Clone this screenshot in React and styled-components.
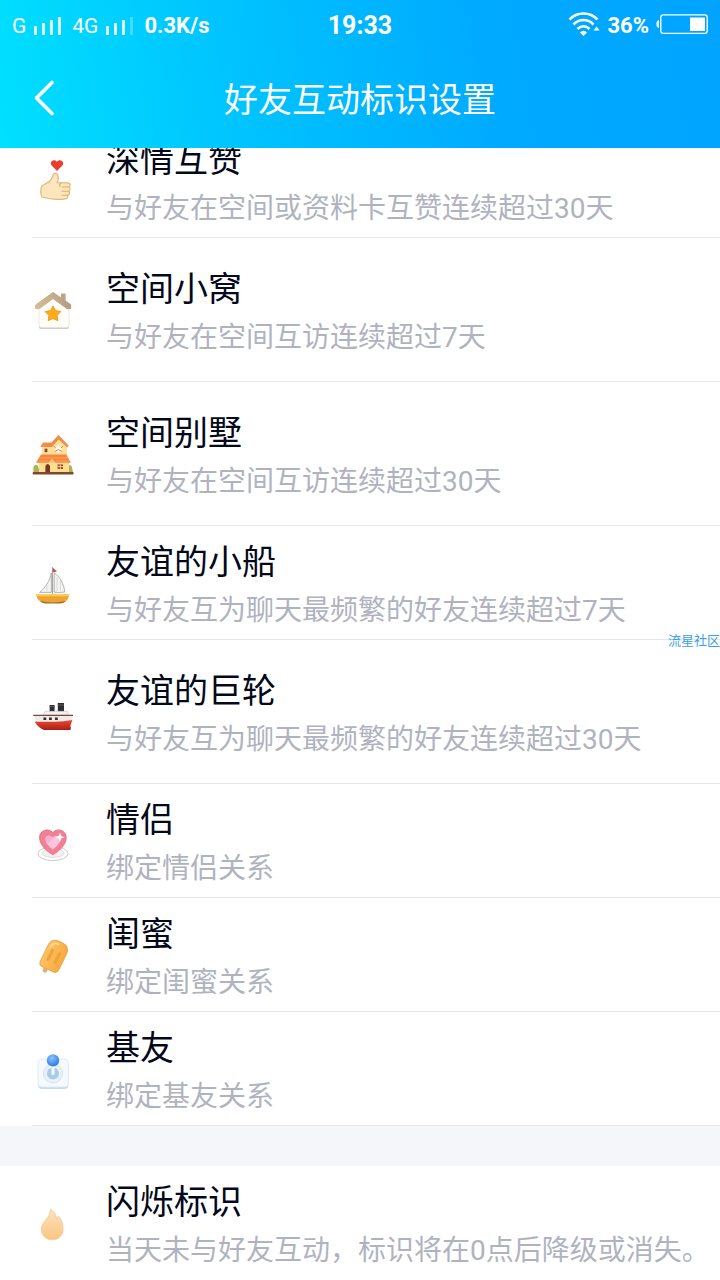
import React from "react";
import styled, { createGlobalStyle } from "styled-components";

const ThumbIcon = () => (
  <Icon viewBox="1 1 42 44" aria-hidden="true">
    <path d="M26 13 L20.6 7.4 C18 4 22.6 0 26 3.8 C29.4 0 34 4 31.4 7.4 Z" fill="#e8402f" />
    <path
      d="M11 28 C13 26 17 25 19 23 C21 20 22 19 22.4 16.6 C23 14.6 26.4 15 27 17.4 C27.6 20 27 22.6 26.4 24.6 L37 24.8 C39.4 25 39.8 28 38 29 C39.6 30 39.4 32.6 37.8 33.2 C39 34.4 38.6 36.6 36.8 37.2 C37.4 38.8 36.4 40.6 34.4 40.8 C27 42 19 41.6 11 39 C9.6 36 9.6 31 11 28 Z"
      fill="#fde6bd"
      stroke="#dfb878"
      strokeWidth="1.2"
    />
    <path
      d="M38 29 H31 M37.8 33.2 H31 M36.8 37.2 H31 M30 25 C28.6 26 28.4 27.4 29 28.4"
      fill="none"
      stroke="#dfae68"
      strokeWidth="1.1"
      strokeLinecap="round"
    />
  </Icon>
);

const HouseIcon = () => (
  <Icon viewBox="1 1 42 44" aria-hidden="true">
    <defs>
      <linearGradient id="roof" x1="0" y1="0" x2="1" y2="0">
        <stop offset="0" stopColor="#d4bd94" />
        <stop offset="1" stopColor="#b59b83" />
      </linearGradient>
    </defs>
    <rect x="8" y="39" width="30" height="3" rx="1.4" fill="#d2cdc8" />
    <path d="M22 9 L38 21 V38 Q38 40.4 36 40.4 H10 Q8 40.4 8 38 V21 Z" fill="#fffdfa" stroke="#e7e0da" strokeWidth="0.8" />
    <rect x="30" y="6.4" width="4.6" height="10" rx="0.8" fill="#bba28a" />
    <path d="M22 5.4 L39.6 17.6 V21.6 H36 L22 11.6 L8.4 21.6 H4.6 V18 Z" fill="url(#roof)" stroke="url(#roof)" strokeLinejoin="round" />
    <path
      d="M22 19 L24.5 23.6 L29.8 24.6 L26.1 28.4 L26.8 33.6 L22 31.4 L17.2 33.6 L17.9 28.4 L14.2 24.6 L19.5 23.6 Z"
      fill="#ffad1f"
      stroke="#f59a12"
      strokeLinejoin="round"
    />
  </Icon>
);

const VillaIcon = () => (
  <Icon viewBox="1 1 42 44" aria-hidden="true">
    <path d="M2.4 42 V36 Q4.4 32 7 35 L9 42 Z M36 42 V36 Q39 32 41 36 L42 42 Z" fill="#a9b455" />
    <path d="M11 15 H20 L27.4 7 L36 15 V25 H11 Z" fill="#ffdf9c" />
    <path d="M12 11.6 H20.6 L27.4 4 L37.6 14.6 L36.4 16.4 L27.6 8.4 L21 16 H9.4 Z" fill="#f38b42" />
    <path d="M23.6 14.4 L26 16 L27.4 13.6 L29 16 L31.4 14.4 L31 19.6 L27.4 22 L23.8 19.6 Z" fill="#fff8e4" />
    <path d="M22.6 15 L24.8 17 M32.2 15 L30 17 M24 20.4 L27.4 18.6 L31 20.4" stroke="#dc8448" fill="none" />
    <rect x="13.6" y="17.6" width="2.8" height="3.6" fill="#884a2c" />
    <rect x="8" y="30" width="30" height="12" fill="#ffdd91" />
    <path d="M10 23.6 H35.4 L39.8 31.8 H5 Z" fill="#f7863b" />
    <path d="M17 32 L21 27.6 L25 32 Z" fill="#ffc27c" />
    <path d="M9 27 H37 M8 30 H17 M25 30 H38" stroke="#ffa968" strokeWidth="0.8" />
    <path d="M14.4 41.4 V35 Q16.7 30.8 19 35 V41.4 Z" fill="#75371e" />
    <rect x="26.6" y="33.4" width="5.4" height="4.6" fill="#954d2b" />
    <path d="M29.3 33.4 V38 M26.6 35.6 H32" stroke="#ffe0a0" strokeWidth="0.8" />
    <rect x="1.6" y="41" width="41" height="2.6" rx="1" fill="#7c4930" />
  </Icon>
);

const SailboatIcon = () => (
  <Icon viewBox="1 1 42 44" aria-hidden="true">
    <path d="M21 7 L26 11.6 L21 12.6 Z" fill="#cc4a3a" />
    <path d="M20.4 13 C19 21 14 28 8.6 32.4 H20.4 Z M23.2 12.8 C29 17 33 24 33.8 32 Q28 33 23.2 32.2 Z" fill="#f4f4f4" stroke="#aaa" strokeWidth="0.9" />
    <path d="M16 25 V31 M26 17 V31 M29.4 21 V31" stroke="#d4d4d4" strokeWidth="0.8" />
    <path d="M21.6 8 V34" stroke="#a39a93" strokeWidth="1" />
    <path d="M5 34 H38.4 Q37 42.6 31 42.6 H13 Q6.6 42.4 5 34 Z" fill="#eda532" />
    <path d="M5 34 H38.4 L37.8 36.2 H5.6 Z" fill="#ffc95c" />
    <path d="M9 41 Q22 43.6 35 41 Q33 43.4 30 43.4 H14 Q10.6 43.4 9 41 Z" fill="#a87025" />
  </Icon>
);

const LinerIcon = () => (
  <Icon viewBox="1 1 42 44" aria-hidden="true">
    <defs>
      <linearGradient id="hull" x1="0" y1="0" x2="0" y2="1">
        <stop offset="0" stopColor="#ee4c36" />
        <stop offset="1" stopColor="#a91d14" />
      </linearGradient>
    </defs>
    <path d="M18.6 16 H23.6 V22.6 H18.6 Z M26.8 14 H33 V22.6 H26.8 Z" fill="#2e2f35" />
    <path d="M18.6 17.6 H23.6 M26.8 16 H33" stroke="#66676d" strokeWidth="0.8" />
    <path d="M14 22.4 H36.6 L37.6 26.4 H12.4 Z" fill="#f4f2f0" stroke="#ccc8c5" strokeWidth="0.7" />
    <path d="M2.4 26.4 H41.6 L41 34 H5.4 Z" fill="#efebe8" />
    <path d="M2.2 26.4 H42" stroke="#7b4642" strokeWidth="1.2" />
    <path d="M3.6 32.8 H24 Q32 32.4 41.2 31 L39.4 37 Q40.6 40.6 39 41 H13 Q7.6 39 3.6 32.8 Z" fill="url(#hull)" />
    <path d="M12.4 28.4 H15.2 V31 H12.4 Z M18 28.4 H20.8 V31 H18 Z M24 28.4 H26.8 V31 H24 Z" fill="#35302f" />
  </Icon>
);

const HeartIcon = () => (
  <Icon viewBox="1 1 42 44" aria-hidden="true">
    <ellipse cx="22" cy="35.6" rx="15" ry="7" fill="#fff" stroke="#cfcaca" />
    <ellipse cx="22" cy="35" rx="11" ry="4.4" fill="#f7eff0" stroke="#ddd5d6" strokeWidth="0.8" />
    <path d="M21.8 36.6 C16 33.6 8.6 27 8.6 19.6 C8.6 12 17.6 9.6 21.8 14.6 C26 9.6 35.2 12 35.2 19.6 C35.2 27 27.6 33.6 21.8 36.6 Z" fill="#f27f93" stroke="#ea7187" />
    <path d="M21.8 31.4 C18 28.4 14.4 25 14.4 21.4 C14.4 17 19.8 16.6 21.8 20 C23.8 16.6 29.2 17 29.2 21.4 C29.2 25 25.6 28.4 21.8 31.4 Z" fill="#fcc6df" />
    <path d="M14.6 20 C15.4 16.6 20 17 21.8 20 L17 26 C15 24 14 22 14.6 20 Z" fill="#f9afd2" />
    <path d="M29 14.6 L30.2 18 L33.6 19.2 L30.2 20.4 L29 24 L27.8 20.4 L24.4 19.2 L27.8 18 Z" fill="#fff" />
  </Icon>
);

const PopsicleIcon = () => (
  <Icon viewBox="1 1 42 44" aria-hidden="true">
    <defs>
      <linearGradient id="ice" x1="0" y1="0" x2="1" y2="0">
        <stop offset="0" stopColor="#ffc263" />
        <stop offset="1" stopColor="#f9aa40" />
      </linearGradient>
    </defs>
    <g transform="rotate(26 23 24)">
      <rect x="18.8" y="37" width="4.6" height="6" rx="2" fill="#d9b182" />
      <path d="M13 17 Q13 8.6 21 8.6 H25 Q33.4 8.6 33.4 17 V34 Q33.4 38.6 29 38.6 H17 Q13 38.6 13 34 Z" fill="url(#ice)" stroke="#eeaa50" />
      <rect x="17.6" y="18" width="3.2" height="13" rx="1.6" fill="#f0a23c" />
      <rect x="25.4" y="18" width="3.2" height="13" rx="1.6" fill="#f0a23c" />
      <path d="M16 17 Q16.4 11.6 22 11.4" fill="none" stroke="#ffe1a2" strokeWidth="1.6" strokeLinecap="round" />
    </g>
  </Icon>
);

const JoystickIcon = () => (
  <Icon viewBox="1 1 42 44" aria-hidden="true">
    <defs>
      <radialGradient id="ball" cx="0.4" cy="0.3" r="0.7">
        <stop offset="0" stopColor="#8ac4ff" />
        <stop offset="1" stopColor="#2e79e3" />
      </radialGradient>
    </defs>
    <rect x="7" y="15" width="30.4" height="28" rx="4" fill="#cbdcea" />
    <rect x="7" y="13" width="30.4" height="28" rx="4" fill="#f4fafe" stroke="#dde9f2" strokeWidth="0.8" />
    <circle cx="22" cy="27.4" r="9.6" fill="#e8f1f8" stroke="#d6e4ef" />
    <circle cx="22" cy="27.4" r="6" fill="#a9cbe9" />
    <path d="M20.4 18 H23.6 V28 Q22 30 20.4 28 Z" fill="#f4f8fb" />
    <circle cx="22" cy="14.4" r="6.2" fill="url(#ball)" />
  </Icon>
);

const FlameIcon = () => (
  <Icon viewBox="1 1 42 44" aria-hidden="true">
    <defs>
      <linearGradient id="flame" x1="0" y1="0" x2="0" y2="1">
        <stop offset="0" stopColor="#fde2bd" />
        <stop offset="1" stopColor="#fcc581" />
      </linearGradient>
    </defs>
    <path
      d="M19.4 9.4 C24 12 25.4 15.6 25.6 20 C26.6 18.6 27 17.6 27 16 C30.6 19 32 24 32 29 C32 35.6 27.4 39.8 21.4 39.8 C15 39.8 10.4 35.6 10.4 29.6 C10.4 24 14 21 16.6 17.6 C18.4 15 19.4 12.6 19.4 9.4 Z"
      fill="url(#flame)"
      stroke="#f5cea0"
    />
  </Icon>
);

const marks = [
  { title: "深情互赞", text: "与好友在空间或资料卡互赞连续超过30天", icon: <ThumbIcon /> },
  { title: "空间小窝", text: "与好友在空间互访连续超过7天", icon: <HouseIcon />, tall: true },
  { title: "空间别墅", text: "与好友在空间互访连续超过30天", icon: <VillaIcon />, tall: true },
  { title: "友谊的小船", text: "与好友互为聊天最频繁的好友连续超过7天", icon: <SailboatIcon /> },
  { title: "友谊的巨轮", text: "与好友互为聊天最频繁的好友连续超过30天", icon: <LinerIcon />, tall: true },
  { title: "情侣", text: "绑定情侣关系", icon: <HeartIcon /> },
  { title: "闺蜜", text: "绑定闺蜜关系", icon: <PopsicleIcon /> },
  { title: "基友", text: "绑定基友关系", icon: <JoystickIcon /> },
];

const Signal = ({ weak }) => (
  <SignalBars viewBox="0 0 28 22" aria-hidden="true">
    <path d="M1.5 20 V11 M9.5 20 V8 M17.5 20 V5" />
    <path d="M25.5 20 V2" opacity={weak ? 0.3 : 1} />
  </SignalBars>
);

const MarkRow = ({ item }) => (
  <Row $tall={item.tall}>
    {item.icon}
    <RowBody>
      <RowTitle>{item.title}</RowTitle>
      <RowText>{item.text}</RowText>
    </RowBody>
  </Row>
);

const App = () => {
  return (
    <Page>
      <GlobalStyle />
      <Header>
        <StatusBar>
          <StatusLeft>
            <Network>G</Network>
            <Signal />
            <Network>4G</Network>
            <Signal weak />
            <StatusText>0.3K/s</StatusText>
          </StatusLeft>
          <Clock>19:33</Clock>
          <StatusRight>
            <Wifi viewBox="0 0 32 28" aria-hidden="true">
              <path d="M1.5 7.5 C9 -0.5 22 -0.5 29.5 7.5 M5.5 12.5 C11 6.5 20 6.5 25.5 12.5 M9.5 17 C13 13.4 18 13.4 21.5 17" fill="none" stroke="#fff" strokeWidth="2.6" />
              <path d="M12 20.4 Q15.5 17 19 20.4 L15.5 24 Z M28.6 14.6 L31.6 18.6 H25.6 Z" fill="#fff" />
            </Wifi>
            <StatusText>36%</StatusText>
            <Battery viewBox="0 0 52 26" aria-hidden="true">
              <rect x="4.8" y="1.8" width="46.4" height="18.6" rx="2.4" fill="none" stroke="#fff" strokeWidth="1.3" />
              <path d="M3 7 V15 Q0.4 14.6 0.4 11 Q0.4 7.4 3 7 Z M34 4.6 H49 V18 H34 Z" fill="#fff" />
            </Battery>
          </StatusRight>
        </StatusBar>
        <NavBar>
          <BackButton type="button" aria-label="返回">
            <BackArrow viewBox="0 0 24 40" aria-hidden="true">
              <path d="M20 4.5 L4.5 20 L20 35.5" />
            </BackArrow>
          </BackButton>
          <NavTitle>好友互动标识设置</NavTitle>
        </NavBar>
      </Header>
      <List>
        {marks.map((item, index) => {
          return <MarkRow key={index} item={item} />;
        })}
      </List>
      <Divider />
      <Row as="section" $last>
        <FlameIcon />
        <RowBody>
          <RowTitle>闪烁标识</RowTitle>
          <RowText>当天未与好友互动，标识将在0点后降级或消失。</RowText>
        </RowBody>
      </Row>
      <Watermark>流星社区</Watermark>
    </Page>
  );
};

const GlobalStyle = createGlobalStyle`
  * {
    box-sizing: border-box;
  }

  body {
    margin: 0;
    background: #fff;
    font-family: Roboto, "Noto Sans CJK SC", sans-serif;
  }
`;

const Page = styled.div`
  position: relative;
  overflow: hidden;
`;

const Header = styled.header`
  position: relative;
  z-index: 1;
  color: #fff;
  background: linear-gradient(80deg, #00e0ff 0%, #00c4ff 32%, #00aaff 68%, #00a4ff 100%);
`;

const StatusBar = styled.div`
  display: grid;
  grid-template-columns: 1fr auto 1fr;
  align-items: center;
  height: 52px;
  padding: 0 12px;
`;

const StatusLeft = styled.div`
  display: flex;
  align-items: center;
  gap: 8px;
`;

const StatusRight = styled(StatusLeft)`
  justify-content: flex-end;
  gap: 7px;
`;

const Network = styled.span`
  font-size: 21px;
  font-weight: 400;
  line-height: 28px;
`;

const StatusText = styled.span`
  font-size: 22px;
  font-weight: 700;
  line-height: 28px;
`;

const Clock = styled.time`
  font-size: 25px;
  font-weight: 700;
  line-height: 28px;
`;

const SignalBars = styled.svg`
  width: 28px;
  height: 22px;
  margin-right: 2px;
  fill: none;
  stroke: #fff;
  stroke-width: 2.6;
`;

const Wifi = styled.svg`
  width: 32px;
  height: 28px;
`;

const Battery = styled.svg`
  width: 52px;
  height: 26px;
`;

const NavBar = styled.div`
  display: grid;
  grid-template-columns: 80px 1fr 80px;
  align-items: center;
  height: 96px;
`;

const BackButton = styled.button`
  display: flex;
  align-items: center;
  height: 84px;
  padding: 0 0 4px 32px;
  border: 0;
  background: none;
  cursor: pointer;
`;

const BackArrow = styled.svg`
  flex: none;
  width: 24px;
  height: 40px;
  fill: none;
  stroke: #fff;
  stroke-width: 3.6;
  stroke-linecap: round;
  stroke-linejoin: round;
`;

const NavTitle = styled.h1`
  margin: 0;
  font-size: 34px;
  font-weight: 400;
  line-height: 48px;
  text-align: center;
`;

/* the list is scrolled a little way under the header */
const List = styled.ul`
  margin: -24px 0 0;
  padding: 0;
  list-style: none;
`;

const Row = styled.li`
  display: flex;
  align-items: center;
  gap: 32px;
  min-height: ${(props) => (props.$tall ? "144px" : "114px")};
  margin-left: 32px;
  border-bottom: ${(props) => (props.$last ? "0" : "1px solid #e6e7ea")};
`;

const Icon = styled.svg`
  flex: none;
  width: 42px;
  height: 44px;
`;

const RowBody = styled.div`
  padding-top: 8px;
`;

const RowTitle = styled.h2`
  margin: 0;
  color: #03081a;
  font-size: 34px;
  font-weight: 400;
  line-height: 48px;
`;

const RowText = styled.p`
  margin: 0;
  color: #b0b3bf;
  font-size: 28px;
  line-height: 50px;
  white-space: nowrap;
`;

const Divider = styled.div`
  height: 40px;
  background: #f5f6fa;
`;

const Watermark = styled.span`
  position: absolute;
  top: 632px;
  right: 0;
  color: #3ba0ee;
  font-size: 13px;
  line-height: 18px;
`;

export default App;
